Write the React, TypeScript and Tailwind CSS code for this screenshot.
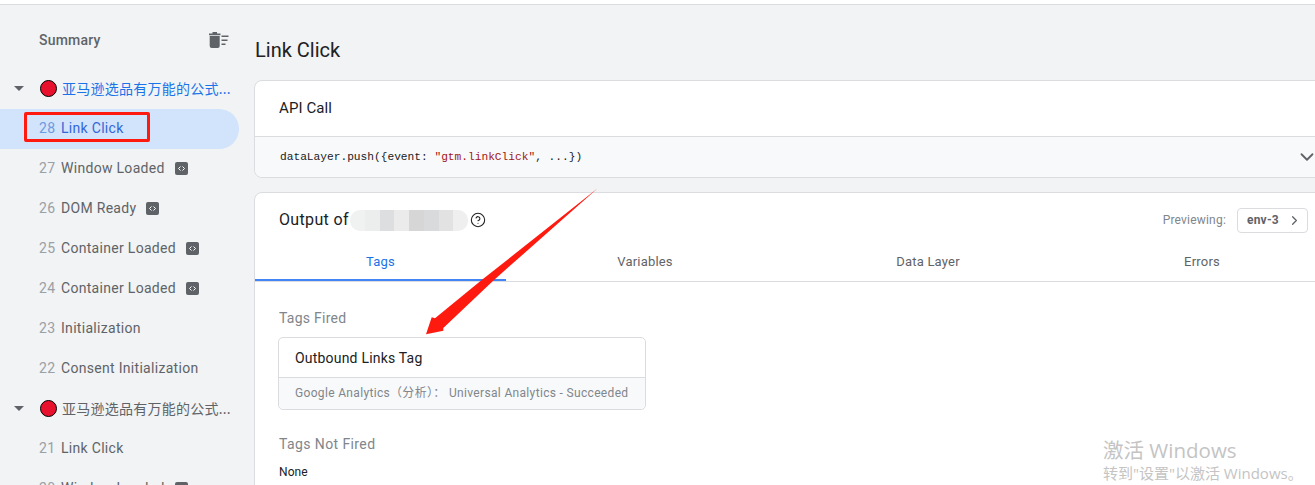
import { ChevronDown, ChevronRight, CircleHelp } from 'lucide-react';

const CJK = '"Noto Sans CJK SC"';

function CodeBadge() {
  return (
    <span className="ml-[10px] flex h-[13px] w-[13px] items-center justify-center rounded-[2px] bg-[#5f6368]">
      <svg width="9" height="7" viewBox="0 0 9 7" fill="none" stroke="#fff" strokeWidth="1">
        <path d="M3.5 1.5 1.5 3.5l2 2M5.5 1.5l2 2-2 2" />
      </svg>
    </span>
  );
}

function TrashSweep() {
  return (
    <svg width="20" height="16" viewBox="0 0 20 16" fill="#5f6368">
      <path d="M0 1.5h3.5V0h4.5v1.5h3.5V3.2H0zM.7 4h10v10a2 2 0 0 1-2 2h-6a2 2 0 0 1-2-2z" />
      <path d="M12.5 3.5h7v1.4h-7zM12.5 7.5h6v1.4h-6zM12.5 11.5h4v1.4h-4z" />
    </svg>
  );
}

function GroupRow({ active }: { active?: boolean }) {
  return (
    <div className="flex h-10 items-center pb-[2px]">
      <span className="ml-[14px] h-0 w-0 border-x-[5px] border-t-[5px] border-x-transparent border-t-[#5f6368]" />
      <span className="ml-[16px] h-[17px] w-[17px] rounded-full border border-black bg-[#e8112d]" />
      <span
        className={`ml-[5px] whitespace-nowrap text-[14px] tracking-[0.25px] ${active ? 'text-[#1a73e8]' : 'text-[#5f6368]'}`}
        style={{ fontFamily: `"Noto Sans", ${CJK}, sans-serif` }}
      >
        亚马逊选品有万能的公式...
      </span>
    </div>
  );
}

function EventRow({
  num,
  label,
  badge,
  active,
}: {
  num: number;
  label: string;
  badge?: boolean;
  active?: boolean;
}) {
  return (
    <div
      className={`flex h-10 w-[239px] items-center rounded-r-full pb-[2px] pl-[39px] text-[14px] tracking-[0.3px] ${
        active ? 'bg-[#d2e3fc] text-[#3367d6]' : 'text-[#5f6368]'
      }`}
    >
      <span className={`w-[22px] ${active ? 'text-[#6b9be0]' : 'text-[#9aa0a6]'}`}>{num}</span>
      <span>{label}</span>
      {badge && <CodeBadge />}
    </div>
  );
}

function Sidebar() {
  return (
    <aside className="relative w-[254px] shrink-0">
      <div className="flex h-[64px] items-center justify-between pl-[39px] pr-[25px] pt-[6px]">
        <span className="text-[14px] font-medium tracking-[0.2px] text-[#5f6368]">Summary</span>
        <TrashSweep />
      </div>
      <GroupRow active />
      <EventRow num={28} label="Link Click" active />
      <EventRow num={27} label="Window Loaded" badge />
      <EventRow num={26} label="DOM Ready" badge />
      <EventRow num={25} label="Container Loaded" badge />
      <EventRow num={24} label="Container Loaded" badge />
      <EventRow num={23} label="Initialization" />
      <EventRow num={22} label="Consent Initialization" />
      <GroupRow />
      <EventRow num={21} label="Link Click" />
      <EventRow num={20} label="Window Loaded" badge />
      {/* red annotation box */}
      <div className="absolute left-[24px] top-[107px] h-[30px] w-[126px] rounded-[2px] border-[3px] border-[#ff1a10]" />
    </aside>
  );
}

const blurCells = [
  'bg-[#f0f2f2]',
  'bg-[#eceded]',
  'bg-[#dcdee0]',
  'bg-[#ebebeb]',
  'bg-[#d6d6d6]',
  'bg-[#d8dadc]',
  'bg-[#e2e2e2]',
  'bg-[#efefef]',
];

function Tab({ label, width, active }: { label: string; width: string; active?: boolean }) {
  return (
    <div
      className={`flex h-[44px] shrink-0 items-center justify-center border-b-2 pt-[8px] text-[13px] tracking-[0.2px] ${width} ${
        active ? 'border-[#4285f4] text-[#1a73e8]' : 'border-transparent text-[#5f6368]'
      }`}
    >
      {label}
    </div>
  );
}

function Main() {
  return (
    <main className="h-[480px] w-[1078px] shrink-0 overflow-hidden">
      <h1 className="flex h-[75px] items-center pt-[15px] text-[20px] text-[#202124]">
        <span className="ml-px">Link Click</span>
      </h1>

      <section className="rounded-[8px] border border-[#dadce0] bg-white">
        <div className="flex h-[56px] items-center border-b border-[#dadce0] px-[24px] text-[15px] tracking-[0.1px] text-[#202124]">
          API Call
        </div>
        <div className="flex h-[40px] items-center justify-between rounded-b-[8px] bg-[#f8f9fa] pl-[25px] pr-[13px]">
          <code className="text-[11.2px] text-[#202124]" style={{ fontFamily: '"Liberation Mono", monospace' }}>
            dataLayer.push({'{'}event: <span className="text-[#a31515]">"gtm.linkClick"</span>, ...{'}'})
          </code>
          <ChevronDown size={22} className="text-[#5f6368]" />
        </div>
      </section>

      <section className="mt-[14px] h-[320px] rounded-t-[8px] border border-[#dadce0] bg-white">
        <div className="flex h-[44px] items-center pl-[24px] pr-[23px] pt-[10px]">
          <span className="w-[71px] whitespace-nowrap text-[16px] tracking-[0.35px] text-[#202124]">Output of</span>
          <div className="flex h-[21px] w-[118px] overflow-hidden rounded-[10px]">
            {blurCells.map((c, i) => (
              <span key={i} className={`flex-1 ${c}`} />
            ))}
          </div>
          <CircleHelp size={16} strokeWidth={1.6} className="ml-[2px] text-[#202124]" />
          <span className="ml-auto text-[12px] tracking-[0.2px] text-[#80868b]">Previewing:</span>
          <div className="ml-[11px] flex h-[25px] w-[71px] items-center justify-between rounded-[4px] border border-[#dadce0] pl-[9px] pr-[5px] text-[12px] font-bold tracking-[0.2px] text-[#5f6368]">
            env-3
            <ChevronRight size={15} />
          </div>
        </div>
        <div className="flex border-b border-[#dadce0]">
          <Tab label="Tags" width="w-[251px]" active />
          <Tab label="Variables" width="w-[278px]" />
          <Tab label="Data Layer" width="w-[288px]" />
          <Tab label="Errors" width="w-[260px]" />
        </div>
        <div className="px-[24px]">
          <h3 className="mt-[26px] text-[14px] tracking-[0.25px] text-[#80868b]">Tags Fired</h3>
          <div className="-ml-px mt-[8px] w-[368px] rounded-[5px] border border-[#dadce0]">
            <div className="flex h-[40px] items-center border-b border-[#dadce0] px-[16px] pt-px text-[14px] tracking-[0.2px] text-[#202124]">
              Outbound Links Tag
            </div>
            <div
              className="flex h-[31px] items-center whitespace-nowrap rounded-b-[5px] bg-[#f8f9fa] px-[16px] pb-[1px] text-[12px] tracking-[0.33px] text-[#80868b]"
              style={{ fontFamily: `Roboto, ${CJK}, sans-serif` }}
            >
              Google Analytics（分析）： Universal Analytics - Succeeded
            </div>
          </div>
          <h3 className="mt-[24px] text-[14px] tracking-[0.4px] text-[#80868b]">Tags Not Fired</h3>
          <p className="mt-[8px] text-[12px] tracking-[0.1px] text-[#202124]">None</p>
        </div>
      </section>
    </main>
  );
}

export default function App() {
  return (
    <div
      className="relative h-[485px] w-[1315px] overflow-hidden bg-[#f1f3f4]"
      style={{ fontFamily: 'Roboto, sans-serif' }}
    >
      <div className="h-[5px] border-b border-[#dadce0] bg-white" />
      <div className="flex">
        <Sidebar />
        <Main />
      </div>

      {/* red annotation arrow */}
      <svg className="absolute left-[420px] top-[180px]" width="185" height="160" viewBox="0 0 185 160">
        <path d="M6 154.3 11.7 137.3 15 138.3 61.7 100 177.7 8.3 74 100 23.3 148 23.3 150.7Z" fill="#ff1a10" />
      </svg>

      {/* Windows activation watermark */}
      <div
        className="absolute left-[1103px] top-[436px] text-[#c4c4c4]"
        style={{ fontFamily: `"Open Sans", ${CJK}, sans-serif` }}
      >
        <div className="text-[20.5px] leading-[28px]">激活 Windows</div>
        <div className="text-[15px] leading-[19px]">转到"设置"以激活 Windows。</div>
      </div>
    </div>
  );
}
